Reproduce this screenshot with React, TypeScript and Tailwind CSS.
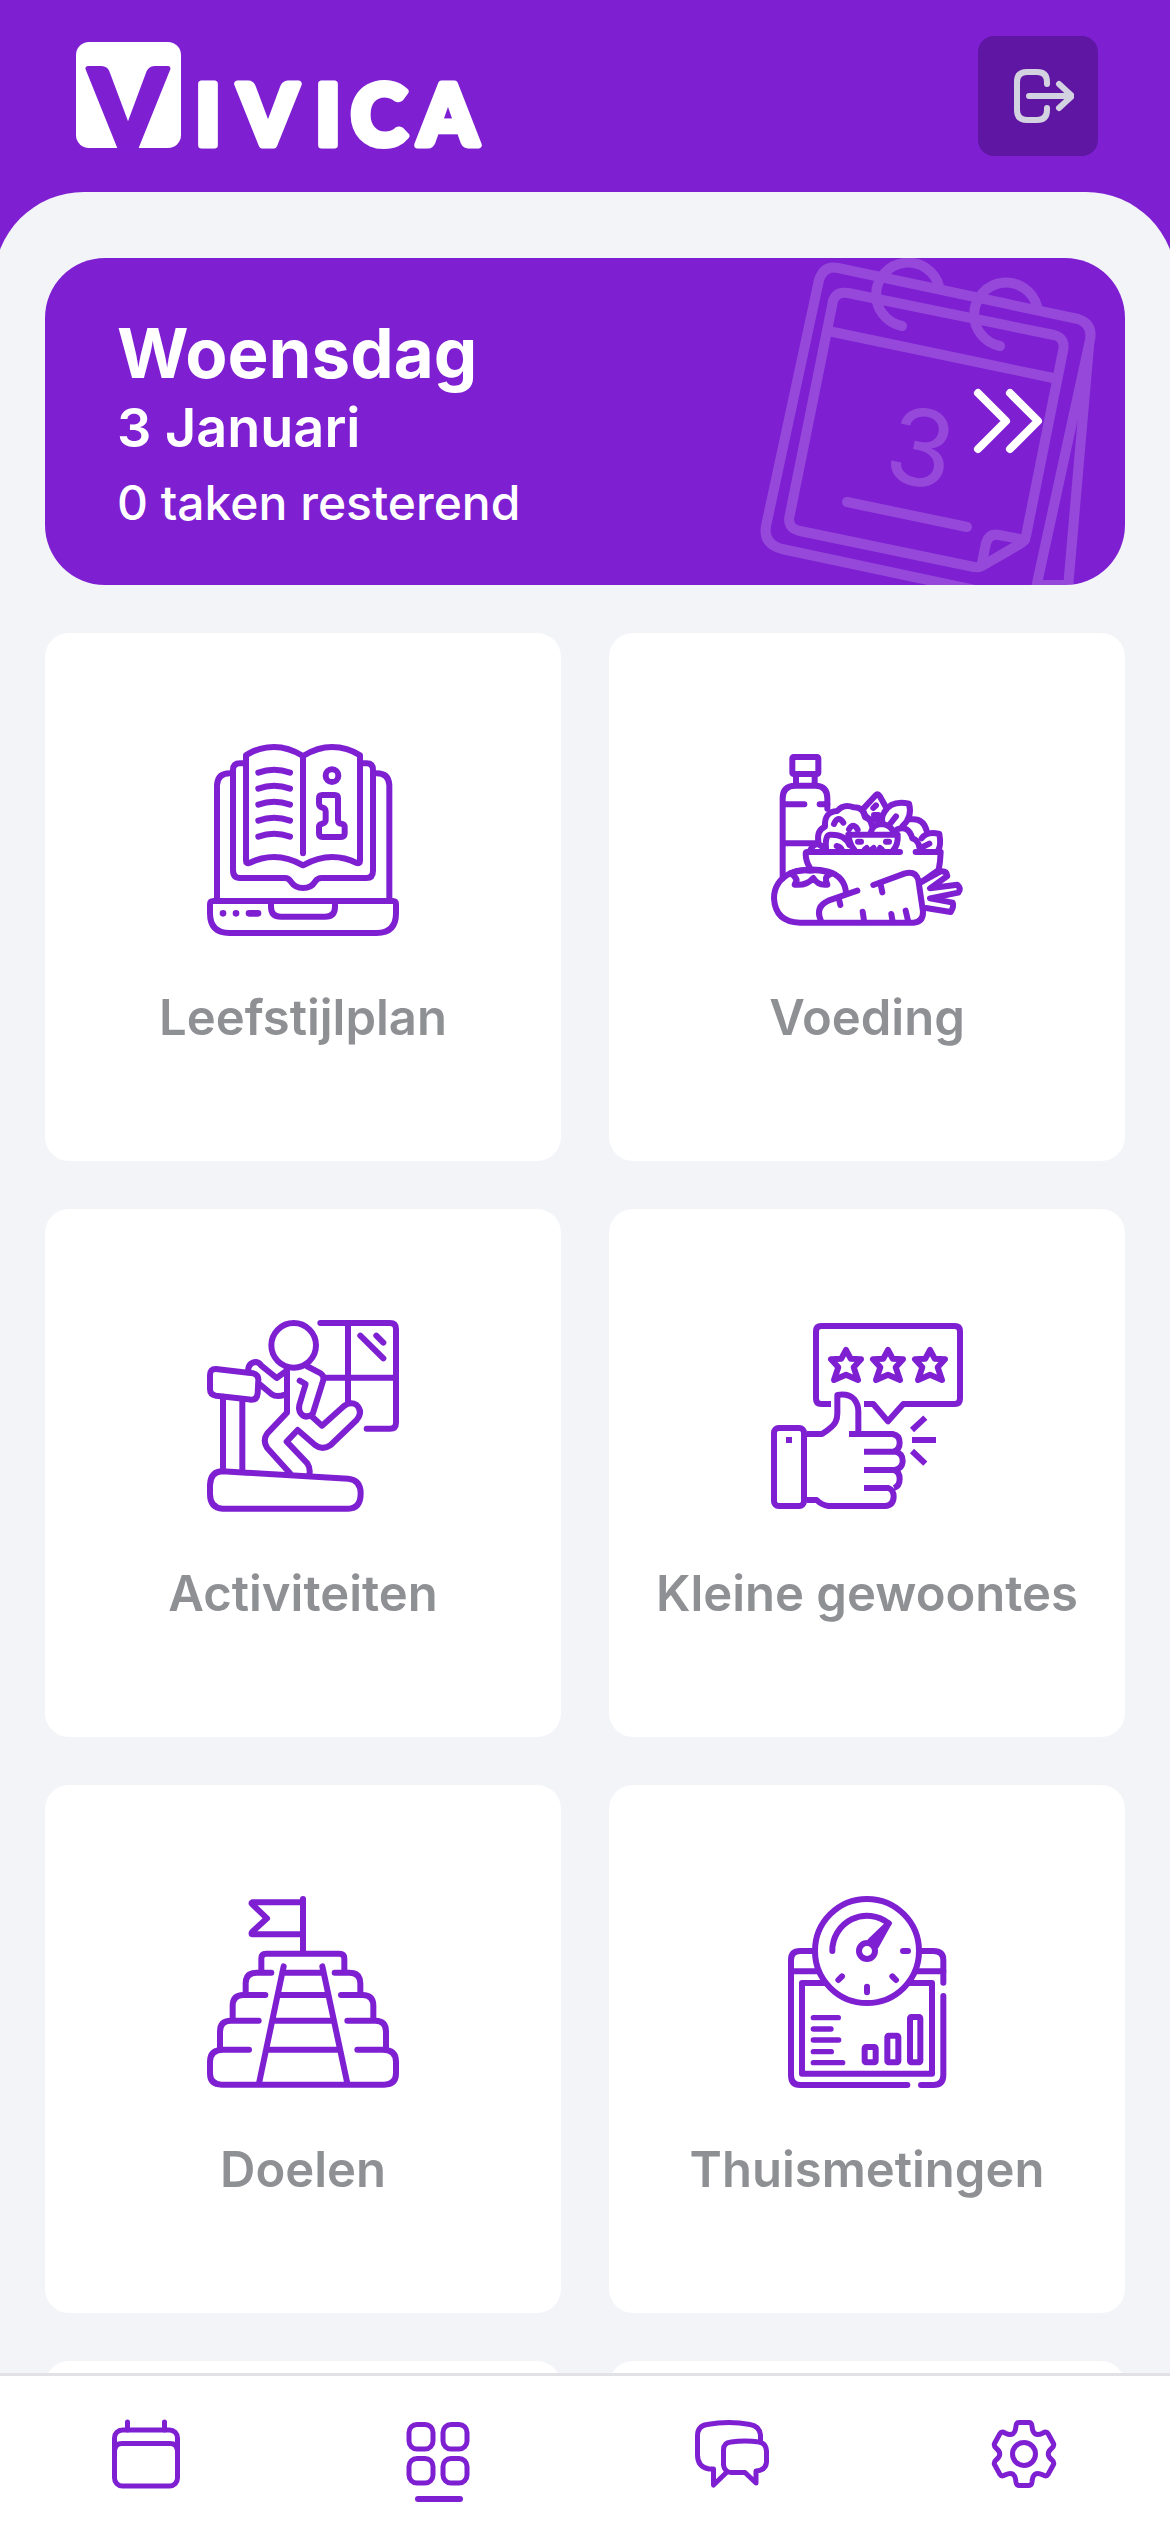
import type { ReactNode } from "react"

type IconProps = { children: ReactNode; viewBox: string }

function TileIcon({ children, viewBox }: IconProps) {
  return (
    <svg
      viewBox={viewBox}
      className="size-48 overflow-visible"
      fill="none"
      stroke="currentColor"
      strokeWidth={18}
      strokeLinecap="round"
      strokeLinejoin="round"
      aria-hidden="true"
    >
      {children}
    </svg>
  )
}

function NavIcon({ children }: { children: ReactNode }) {
  return (
    <svg
      viewBox="0 0 72 72"
      className="size-18 overflow-visible"
      fill="none"
      stroke="currentColor"
      strokeWidth={5}
      strokeLinecap="round"
      strokeLinejoin="round"
      aria-hidden="true"
    >
      {children}
    </svg>
  )
}

const logoLetters = [
  { char: "I", x: 132 },
  { char: "V", x: 192 },
  { char: "I", x: 252 },
  { char: "C", x: 303 },
  { char: "A", x: 372 },
]

function Logo() {
  return (
    <svg viewBox="0 0 412 120" className="h-30 w-[412px] overflow-visible" role="img" aria-label="Vivica">
      <rect y="6" width="105" height="106" rx="13" fill="#fff" />
      <g fontFamily="Lato, sans-serif" fontWeight="900" strokeLinejoin="round" textAnchor="middle">
        <text x="52" y="113" fontSize="111" fill="#7e20d2" stroke="#7e20d2" strokeWidth="5">
          V
        </text>
        <g fontSize="84" fill="#fff" stroke="#fff" strokeWidth="7">
          {logoLetters.map((letter) => (
            <text key={letter.x} x={letter.x} y="109">
              {letter.char}
            </text>
          ))}
        </g>
      </g>
    </svg>
  )
}

function LogoutIcon() {
  return (
    <svg
      viewBox="0 0 72 72"
      className="size-18"
      fill="none"
      stroke="currentColor"
      strokeWidth={6}
      strokeLinecap="round"
      strokeLinejoin="round"
      aria-hidden="true"
    >
      <path d="M45 24V22Q45 12 35 12H25Q15 12 15 22V50Q15 60 25 60H35Q45 60 45 50V48" />
      <path d="M27 36H69M57 24L70 36L57 48" />
    </svg>
  )
}

function CalendarArt() {
  return (
    <svg
      viewBox="0 0 375 327"
      className="absolute right-0 top-0 h-[327px] w-[375px] opacity-[0.18]"
      fill="none"
      stroke="#fff"
      strokeWidth={10}
      strokeLinecap="round"
      strokeLinejoin="round"
      aria-hidden="true"
    >
      <path d="M225 332L32 291Q13 286 16 268L69 22Q74 7 88 10L328 61Q343 66 340 82L286 330" />
      <path d="M339 88L318 330M290 327H316" />
      <path d="M98 35L304 77Q316 80 313 93L276 278Q275 283 270 286L232 308Q228 310 224 309L50 273Q36 270 40 256L83 43Q86 33 98 35Z" />
      <path d="M83 74L303 120" />
      <path d="M232 305L236 285Q239 275 249 277L275 282" />
      <path d="M189 28A32 32 0 1 0 152 68M287 48A32 32 0 1 0 250 88" />
      <path d="M97 244L217 269" />
      <text
        x="171"
        y="228"
        fontFamily="Inter, sans-serif"
        fontSize="106"
        textAnchor="middle"
        fill="#fff"
        stroke="none"
        transform="rotate(12 171 190)"
      >
        3
      </text>
    </svg>
  )
}

function PlanIcon() {
  return (
    <TileIcon viewBox="51 72 576 576">
      <path d="M71 543H608Q618 543 618 553V580Q618 639 560 639H118Q60 639 60 580V553Q60 543 71 543Z" />
      <path d="M243 551V560Q243 590 273 590H405Q435 590 435 560V551" />
      <path d="M99 580H99.1M138 580H138.1M177 580H204" strokeWidth={20} />
      <path d="M81 540V195Q83 160 120 160M598 540V195Q596 160 560 160" />
      <path d="M166 130H150Q129 130 129 150V450Q129 474 150 474H285Q296 474 302 484Q315 504 339 504Q364 504 376 484Q383 474 394 474H529Q549 474 549 452V150Q549 130 530 130H514" />
      <path d="M339 400V108Q295 81 252 81Q205 81 168 106V422Q168 432 178 429Q215 411 252 411Q295 411 339 436Q384 411 426 411Q465 411 500 429Q510 432 510 422V106Q472 81 426 81Q383 81 339 108" />
      {[158, 206, 254, 302, 350].map((y) => (
        <path key={y} d={`M205 ${y}q47 -17 95 0`} />
      ))}
      <circle cx="426" cy="167" r="19" />
      <path d="M397 225H434Q444 225 444 235V300Q444 311 454 311Q464 312 464 322V340Q464 351 453 351H397Q387 351 387 340V322Q387 312 397 311Q407 308 407 300V275Q407 265 397 263Q387 260 387 250V235Q387 225 397 225Z" />
    </TileIcon>
  )
}

function FoodIcon() {
  return (
    <TileIcon viewBox="63 42 576 576">
      <rect x="127" y="81" width="78" height="51" rx="4" />
      <path d="M138 137V160M194 137V160" />
      <path d="M98 445V205Q98 167 136 167H196Q232 167 232 205V236" />
      <path d="M105 223H163M209 223H232M105 340H205" />
      <path d="M450 366H172Q167 366 167 372Q168 395 178 410M497 366H572Q571 395 566 420L516 455" />
      <path d="M205 335Q200 300 225 290Q222 245 262 243Q280 220 312 232Q340 232 345 262Q362 266 365 285" />
      <path d="M252 282Q264 254 280 278M297 298Q310 276 323 299" />
      <path d="M338 238L378 195Q384 191 389 198L408 232M340 243Q345 262 364 270L385 268M370 234L378 226M372 255H385" />
      <path d="M404 245Q425 210 477 221Q488 260 458 288M404 245Q392 264 398 278M420 282L438 259" />
      <path d="M362 308Q368 282 395 282Q420 284 430 305" />
      <path d="M483 268Q520 264 530 302M442 298Q475 285 487 325Q505 330 508 352" />
      <path d="M515 325Q532 302 568 312Q574 345 565 360M520 350L538 341" />
      <path d="M295 314H443Q445 345 430 360M295 314Q300 345 312 358M324 335H333M408 335H417M345 358L350 354M366 358L371 354M390 354L395 358" />
      <path d="M228 355Q225 315 240 314Q285 312 298 345M180 362Q190 340 205 343Q220 350 226 362M260 348Q272 350 276 360" />
      <path d="M288 490Q285 440 235 425Q180 410 120 430Q72 455 72 505Q76 576 150 578H490Q520 576 519 545L505 450Q497 422 465 430L370 465" />
      <path d="M122 430Q145 418 180 422Q215 418 242 432Q225 440 228 452L232 464Q205 468 190 444Q170 468 134 464L140 450Q136 438 122 430Z" />
      <path d="M322 482L235 512Q195 530 212 570" />
      <path d="M268 512L271 525M338 545L342 572M392 464L397 487M424 552L428 575M467 542L474 572" />
      <path d="M516 455L572 424Q590 422 592 438L540 475L622 464Q635 475 625 488L540 505L608 518Q613 530 602 546L528 534" />
    </TileIcon>
  )
}

function ActivityIcon() {
  return (
    <TileIcon viewBox="51 60 576 576">
      <circle cx="311" cy="136" r="67" />
      <path d="M391 69H600Q618 69 618 87V368Q618 386 600 386H530M474 69V305M405 233H618M511 107L580 175M559 107L580 128" />
      <path d="M78 207L190 220Q206 224 205 240L203 280Q201 300 183 299L78 287Q60 284 60 268V225Q60 206 78 207Z" />
      <path d="M99 290V510M157 297V512" />
      <path d="M98 514L475 536Q512 540 512 580Q512 626 475 626H98Q60 624 60 582V555Q62 514 98 514Z" />
      <path d="M174 215Q175 187 198 186Q208 187 214 197L260 234L290 212M212 255L245 283Q260 293 285 284" />
      <path d="M291 205V338L232 400Q217 420 231 443L300 520" />
      <path d="M358 525Q362 505 352 490L290 425L323 390L375 435Q398 452 422 435L500 360Q520 335 500 315Q482 303 462 318L396 377L368 352" />
      <path d="M350 198L392 220Q403 228 400 240L368 342Q345 358 332 340Q325 330 328 315L347 252L329 242" />
    </TileIcon>
  )
}

function HabitsIcon() {
  return (
    <TileIcon viewBox="63 60 576 576">
      <g strokeLinecap="butt">
        <path d="M243 312H214Q198 312 198 296V94Q198 78 214 78H614Q630 78 630 94V296Q630 312 614 312H460L414 364L370 312H342" />
        <path d="M170 402H216Q250 380 257 365Q262 355 262 340V285Q295 280 312 297Q325 312 325 335V402" />
        <path d="M297 402H428Q449 406 449 428Q449 450 430 455M342 455H435Q458 460 458 482Q458 505 435 510M342 510H432Q449 515 449 537Q449 558 432 564M342 564H415Q431 570 431 590Q430 617 405 618H235Q215 615 200 600H170" />
        <path d="M486 390L526 353M486 420H558M486 453L526 491" />
      </g>
      {[288, 414, 540].map((x) => (
        <path key={x} d={`M${x} 150l14 26l31 2l-22 24l13 38l-36 -16l-36 16l13 -38l-22 -24l31 -2z`} />
      ))}
      <rect x="72" y="384" width="90" height="234" rx="14" />
      <rect x="108" y="411" width="18" height="18" fill="currentColor" stroke="none" />
    </TileIcon>
  )
}

function GoalsIcon() {
  return (
    <TileIcon viewBox="51 78 576 576">
      <path d="M339 87V245M335 97H187Q182 99 187 103L231 145L187 185Q182 192 187 193H335" />
      <path d="M214 303V265Q214 251 228 251H448Q463 251 463 265V303" />
      <path d="M244 308H200Q167 308 167 340V370M434 308H478Q511 308 511 340V370" />
      <path d="M226 375H160Q128 375 128 408V448M453 375H518Q550 375 550 408V448" />
      <path d="M206 452H122Q90 452 90 485V535M472 452H556Q588 452 588 485V535" />
      <path d="M177 539H100Q60 539 60 575V610Q60 644 95 644H583Q618 644 618 610V575Q618 539 578 539H502" />
      <path d="M281 289L207 640M397 289L472 640M285 308H395M268 375H412M253 452H430M233 539H445" />
    </TileIcon>
  )
}

function MeasureIcon() {
  return (
    <TileIcon viewBox="63 78 576 576">
      <circle cx="351" cy="243" r="156" />
      <path d="M247 243A104 104 0 0 1 416 160" />
      <path d="M416 160L362 212L378 228Z" fill="currentColor" />
      <circle cx="351" cy="243" r="24" fill="#fff" />
      <path d="M459 243H474M351 350V367M276 319L265 330M427 319L438 330" />
      <path d="M192 243H150Q123 243 123 270V615Q123 645 150 645H472M513 645H550Q580 645 580 615V378M580 338V270Q580 243 550 243H510" />
      <path d="M123 304H205M498 304H580" />
      <path d="M225 339H156V611H546V339H480" />
      <path d="M190 443H265M190 477H243M190 510H266M190 545H244M190 578H278" strokeWidth={16} />
      <rect x="344" y="531" width="33" height="46" rx="4" />
      <rect x="412" y="497" width="33" height="80" rx="4" />
      <rect x="480" y="441" width="31" height="136" rx="4" />
    </TileIcon>
  )
}

const tiles = [
  { label: "Leefstijlplan", icon: <PlanIcon /> },
  { label: "Voeding", icon: <FoodIcon /> },
  { label: "Activiteiten", icon: <ActivityIcon /> },
  { label: "Kleine gewoontes", icon: <HabitsIcon /> },
  { label: "Doelen", icon: <GoalsIcon /> },
  { label: "Thuismetingen", icon: <MeasureIcon /> },
]

const navItems = [
  {
    id: "agenda",
    icon: (
      <NavIcon>
        <rect x="4.5" y="12" width="63" height="56" rx="8" />
        <path d="M17.5 4V12M54.5 4V12M4.5 33Q5 25.5 12 25.5H60Q67 25.5 67.5 33" />
      </NavIcon>
    ),
  },
  {
    id: "overzicht",
    active: true,
    icon: (
      <NavIcon>
        <rect x="6" y="6.5" width="24" height="24.5" rx="8" />
        <rect x="40" y="6.5" width="24" height="24.5" rx="8" />
        <rect x="6" y="40.5" width="24" height="24.5" rx="8" />
        <rect x="40" y="40.5" width="24" height="24.5" rx="8" />
      </NavIcon>
    ),
  },
  {
    id: "berichten",
    icon: (
      <NavIcon>
        <path d="M32 54L18.5 67V51H14Q2.5 49 2.5 37V18Q2.5 8 12 6.5Q34 2.5 55 6.5Q64.5 8 65.5 17V24" />
        <path d="M28.5 47V32Q28.5 24.5 36 24Q50 22 64 24Q71 25 71.5 33V44Q71 52 61 53V65L50 54.5H36Q29.5 54 28.5 47Z" />
      </NavIcon>
    ),
  },
  {
    id: "instellingen",
    icon: (
      <NavIcon>
        <path d="M31 4.5H41Q43.5 4.5 44 8Q44.5 14 47 15.8Q50 17.5 54.5 15.2Q58.5 13 60 15.5L65.5 25.5Q66.5 28 63.5 30.5Q57 36 63.5 41.5Q66.5 44 65.5 46.5L60 56.5Q58.5 59 54.5 56.8Q50 54.5 47 56.2Q44.5 58 44 64Q43.5 67.5 41 67.5H31Q28.5 67.5 28 64Q27.5 58 25 56.2Q22 54.5 17.5 56.8Q13.5 59 12 56.5L6.5 46.5Q5.5 44 8.5 41.5Q15 36 8.5 30.5Q5.5 28 6.5 25.5L12 15.5Q13.5 13 17.5 15.2Q22 17.5 25 15.8Q27.5 14 28 8Q28.5 4.5 31 4.5Z" />
        <circle cx="36" cy="36" r="11.5" />
      </NavIcon>
    ),
  },
]

export default function App() {
  return (
    <div className="flex h-screen flex-col overflow-hidden bg-[#7e20d2] font-['Inter',sans-serif]">
      <header className="flex items-center justify-between py-9 pr-18 pl-19">
        <Logo />
        <button
          type="button"
          aria-label="Uitloggen"
          className="flex size-30 items-center justify-center rounded-2xl bg-[#5f16a3] text-[#d3d2e0]"
        >
          <LogoutIcon />
        </button>
      </header>

      {/* Sheet is slightly wider than the screen so the corners run off the edge */}
      <main className="-mx-1.5 min-h-0 flex-1 overflow-y-auto rounded-t-[90px] bg-[#f3f4f8] px-[51px] pt-[66px] pb-12 [scrollbar-width:none]">
        <a
          href="#vandaag"
          className="relative flex min-h-[327px] items-center justify-between overflow-hidden rounded-[60px] bg-[#7e20d2] pr-20 pl-18 text-white"
        >
          <CalendarArt />
          <div>
            <h1 className="text-[69px] leading-[84px] font-bold">Woensdag</h1>
            <p className="text-[54px] leading-[66px] font-semibold">3 Januari</p>
            <p className="mt-3 text-[48px] leading-[60px] font-medium">0 taken resterend</p>
          </div>
          <svg
            viewBox="0 0 72 72"
            className="relative size-18"
            fill="none"
            stroke="currentColor"
            strokeWidth={8}
            strokeLinecap="round"
            strokeLinejoin="round"
            aria-hidden="true"
          >
            <path d="M5 7L33 35L5 63M37 7L65 35L37 63" />
          </svg>
        </a>

        <div className="mt-12 grid grid-cols-2 gap-12">
          {tiles.map((tile) => (
            <a
              key={tile.label}
              href="#tegel"
              className="flex min-h-[528px] flex-col items-center rounded-3xl bg-white pt-[111px] text-[#7e20d2]"
            >
              {tile.icon}
              <span className="mt-13 text-[49px] leading-[60px] font-semibold text-[#8e9093]">{tile.label}</span>
            </a>
          ))}
          <div className="min-h-[528px] rounded-3xl bg-white" />
          <div className="min-h-[528px] rounded-3xl bg-white" />
        </div>
      </main>

      <nav className="flex border-t-3 border-[#e2e2e6] bg-white pt-[42px] pb-[30px] text-[#7e20d2]">
        {navItems.map((item) => (
          <a key={item.id} href={`#${item.id}`} aria-label={item.id} className="flex flex-1 flex-col items-center gap-1.5">
            {item.icon}
            <span className={item.active ? "h-1.5 w-12 rounded-full bg-[#7e20d2]" : "h-1.5 w-12"} />
          </a>
        ))}
      </nav>
    </div>
  )
}
